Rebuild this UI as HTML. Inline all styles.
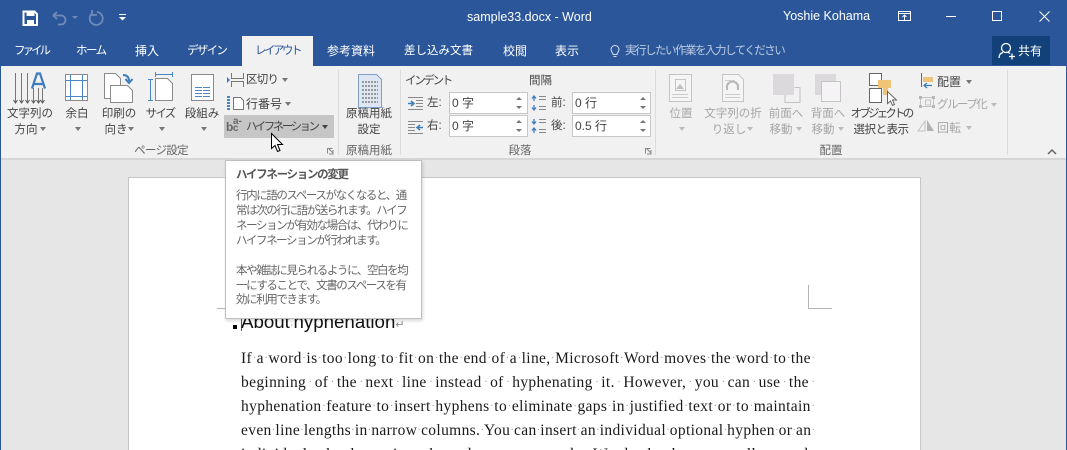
<!DOCTYPE html>
<html lang="ja"><head><meta charset="utf-8"><title>sample33.docx - Word</title>
<style>
html,body{margin:0;padding:0;width:1067px;height:450px;overflow:hidden}
#r{position:absolute;left:0;top:0;width:1067px;height:450px;overflow:hidden;background:#e6e6e6;font-family:"Liberation Sans","Noto Sans CJK JP",sans-serif;color:#444}
#r div,#r svg{position:absolute}
svg{overflow:visible}
.t{white-space:nowrap;font-size:11.5px;line-height:16px;color:#444}
.c{text-align:center;transform:translateX(-50%)}
.w{color:#fff}
.g{color:#a6a6a6}
.d{color:#666}
#r .ln{left:241px;width:574px;height:24px;display:flex;justify-content:space-between;font-family:"Liberation Serif","DejaVu Serif",serif;font-size:15.5px;letter-spacing:.35px;line-height:24px;color:#1a1a1a;white-space:nowrap}
.ln i{font-style:normal;color:#999;font-size:10px;letter-spacing:0}
.box{background:#fff;border:1px solid #c6c6c6;height:22px;width:79px;box-sizing:border-box}
.car{width:0;height:0;border-left:3.5px solid transparent;border-right:3.5px solid transparent;border-top:4px solid #777}
.cg{border-top-color:#bbb}
.tip{font-size:11.5px;letter-spacing:-1.4px;line-height:15px;color:#666;white-space:nowrap}
</style></head><body><div id="r">
<!-- title bar -->
<div style="left:0;top:0;width:1067px;height:66px;background:#2b579a"></div>
<svg style="left:0;top:0" width="400" height="36">
<path d="M23.500 11.500h11l2.500 2.500v11h-13.500z" fill="none" stroke="#fff" stroke-width="2"/><rect x="26.500" y="11" width="8" height="5" fill="#fff"/><rect x="27" y="20" width="7" height="5" fill="#fff"/>
<path d="M53 15.500l4-3.500M53 15.500l4 3.500M53 15.500h8a4.500 4.500 0 0 1 0 9h-3" fill="none" stroke="#6f8bb8" stroke-width="1.800"/>
<path d="M72 16h6l-3 3z" fill="#6f8bb8"/>
<path d="M92 13.500a6.500 6.500 0 1 0 5 -1.500M92 10v5h5" fill="none" stroke="#6f8bb8" stroke-width="1.800"/>
<path d="M119 14.500h7" stroke="#fff"/><path d="M119 17h7l-3.500 3.500z" fill="#fff"/>
</svg>
<div class="t w" style="left:467px;top:9px;font-size:12.500px">sample33.docx - Word</div>
<div class="t w" style="left:783px;top:8px;font-size:12.500px">Yoshie Kohama</div>
<svg style="left:890px;top:0" width="177" height="36">
<rect x="8.500" y="11.500" width="12" height="9" fill="none" stroke="#fff"/><path d="M8 13.500h13" stroke="#fff"/><path d="M14.500 20v-5M12.500 17l2-2 2 2" fill="none" stroke="#fff"/>
<path d="M56 16.500h10" stroke="#fff"/>
<rect x="102.500" y="11.500" width="9" height="9" fill="none" stroke="#fff"/>
<path d="M149.500 11.500l10 10M159.500 11.500l-10 10" stroke="#fff"/>
</svg>
<!-- tabs -->
<div class="t w" style="left:14px;top:43px;letter-spacing:-3px">ファイル</div>
<div class="t w" style="left:76px;top:43px;letter-spacing:-1.5px">ホーム</div>
<div class="t w" style="left:135px;top:43px;font-size:12px">挿入</div>
<div class="t w" style="left:187px;top:43px;letter-spacing:-1.7px">デザイン</div>
<div style="left:242px;top:36px;width:71px;height:30px;background:#f1f1f1"></div>
<div class="t" style="left:255px;top:43px;color:#2b579a;letter-spacing:-2.5px">レイアウト</div>
<div class="t w" style="left:327px;top:43px;font-size:12px">参考資料</div>
<div class="t w" style="left:404px;top:43px">差し込み文書</div>
<div class="t w" style="left:503px;top:43px;font-size:12px">校閲</div>
<div class="t w" style="left:555px;top:43px;font-size:12px">表示</div>
<svg style="left:608px;top:43px" width="14" height="16"><path d="M5 11.500c0-2-2-2.500-2-5a4 4 0 0 1 8 0c0 2.500-2 3-2 5zM5.500 13.500h3" fill="none" stroke="#d5deec"/></svg>
<div class="t" style="left:625px;top:43px;color:#bccbe2;letter-spacing:-1.5px">実行したい作業を入力してください</div>
<div style="left:992px;top:36px;width:58px;height:29px;background:#124078"></div>
<svg style="left:998px;top:42px" width="18" height="18"><circle cx="8" cy="6" r="4.500" fill="none" stroke="#fff" stroke-width="1.300"/><path d="M1 16c0-3.500 2-5 4-5.500M10 10.500c1 .2 1.500.5 2 1M11 14.500h6M14 11.500v6" fill="none" stroke="#fff" stroke-width="1.300"/></svg>
<div class="t w" style="left:1018px;top:43px;font-size:12px">共有</div>
<!-- ribbon -->
<div style="left:1px;top:66px;width:1065px;height:92px;background:#f1f1f1"></div>
<div style="left:1px;top:158px;width:1065px;height:2px;background:#d6d6d6"></div>
<div style="left:0;top:66px;width:1px;height:384px;background:#2b579a"></div>
<div style="left:1066px;top:66px;width:1px;height:384px;background:#2b579a"></div>
<div style="left:338px;top:70px;width:1px;height:85px;background:#dcdcdc"></div>
<div style="left:400px;top:70px;width:1px;height:85px;background:#dcdcdc"></div>
<div style="left:655px;top:70px;width:1px;height:85px;background:#dcdcdc"></div>
<div style="left:1007px;top:70px;width:1px;height:85px;background:#dcdcdc"></div>

<svg style="left:0;top:66px" width="1067" height="92">
<!-- text direction -->
<path d="M15.500 7v30M21.500 7v30M27.500 7v30M33.500 22v15M38.500 22v15M42.500 22v15" stroke="#777" fill="none"/>
<path d="M13.500 34l2 3 2-3M19.500 34l2 3 2-3M25.500 34l2 3 2-3M31.500 34l2 3 2-3M36.500 34l2 3 2-3M40.500 34l2 3 2-3" stroke="#555" fill="none"/>
<path d="M32 22.500l5-15h3l5 15M34 18h9" stroke="#3f7cbd" stroke-width="2.200" fill="none"/>
<!-- margins -->
<rect x="65.500" y="8.500" width="22" height="26" fill="#fff" stroke="#8a8a8a"/><path d="M70.500 9v25M82.500 9v25M66 14.500h21M66 30.500h21" stroke="#4a86c5"/>
<!-- orientation -->
<path d="M104.500 7.500h11l5 5v20h-16z" fill="#fff" stroke="#8a8a8a"/><path d="M110.500 19.500h17l5 5v12h-22z" fill="#fff" stroke="#8a8a8a"/>
<path d="M123 9c4 0 6 2 6 6M125.500 13l3.500 4 3.500-4" fill="none" stroke="#3f7cbd" stroke-width="2"/>
<!-- size -->
<path d="M155 8.500h18M155.500 6v5M172.500 6v5M150.500 13v22M148 13.500h5M148 34.500h5" fill="none" stroke="#4a86c5"/>
<path d="M155.500 12.500h12l5 5v17h-17z" fill="#fff" stroke="#8a8a8a"/>
<!-- columns -->
<rect x="191.500" y="8.500" width="22" height="26" fill="#fff" stroke="#8a8a8a"/>
<path d="M195 21.500h7M203 21.500h7M195 24.500h7M203 24.500h7M195 27.500h7M203 27.500h7M195 30.500h7M203 30.500h7" stroke="#4a86c5"/>
<!-- breaks -->
<path d="M231.500 7v5.500h12V7M231.500 21v-5.500h12V21" fill="none" stroke="#777"/><path d="M227 11v6l3-3z" fill="#3f7cbd"/>
<!-- line nums -->
<path d="M228.500 30v14" stroke="#4a86c5" stroke-width="3" stroke-dasharray="2 1"/>
<path d="M233.500 31.500h7l3 3v9h-10z" fill="#fff" stroke="#777"/>
<!-- genko -->
<path d="M358.500 8.500h18l5 5v28h-23z" fill="#dde6f2" stroke="#7f9fc4"/>
<path d="M362 16h16M362 20h16M362 24h16M362 28h16M362 32h16M362 36h16" stroke="#9a9a9a" stroke-width="2" stroke-dasharray="2 1"/>
<!-- indent icons -->
<path d="M408 31.500h15M416 34.500h7M416 37.500h7M416 40.500h7M408 43.500h15" stroke="#888"/><path d="M408 37.500h6M411 35l3 2.500-3 2.500" fill="none" stroke="#3f7cbd" stroke-width="1.500"/>
<path d="M408 55.500h15M408 58.500h7M408 61.500h7M408 64.500h7M408 67.500h15" stroke="#888"/><path d="M423 61.500h-6M420 59l-3 2.500 3 2.500" fill="none" stroke="#3f7cbd" stroke-width="1.500"/>
<!-- spacing icons -->
<path d="M534 35v-5M532 32.500l2-2.500 2 2.500M534 39v5M532 41.500l2 2.500 2-2.500" fill="none" stroke="#3f7cbd" stroke-width="1.300"/><path d="M539 30.500h7M539 33.500h7M539 40.500h7M539 43.500h7" stroke="#888"/>
<path d="M534 53v5M532 55.500l2 2.500 2-2.500M534 67v-5M532 64.500l2-2.500 2 2.500" fill="none" stroke="#3f7cbd" stroke-width="1.300"/><path d="M539 53.500h7M539 56.500h7M539 63.500h7M539 66.500h7" stroke="#888"/>
<!-- position -->
<rect x="669.500" y="8.500" width="22" height="27" fill="#f5f5f5" stroke="#c4c4c4"/><rect x="675.500" y="13.500" width="10" height="11" fill="none" stroke="#c4c4c4"/><path d="M676 23l4-5 4 5z" fill="#c0c0c0"/><path d="M672 28.500h16M672 31.500h16" stroke="#ccc"/>
<!-- wrap -->
<path d="M722.500 8.500h16l5 5v22h-21z" fill="#f5f5f5" stroke="#c4c4c4"/><path d="M726 19a7 7 0 0 1 13 0v5h-2v-3a4.500 4.500 0 0 0-9 0v3h-2z" fill="#b8b8b8"/><path d="M725 14.500h10M725 28.500h15M725 31.500h15" stroke="#ccc"/>
<!-- forward -->
<rect x="773" y="8" width="21" height="21" fill="#dcd9dc"/><path d="M794.500 21.500h5.500v15h-15v-7.500" fill="none" stroke="#c4c4c4"/>
<!-- back -->
<rect x="815" y="8" width="21" height="21" fill="#dcd9dc"/><rect x="821.500" y="15.500" width="19" height="20" fill="#f5f3f5" stroke="#c4c4c4"/>
<!-- selection pane -->
<rect x="869.500" y="7.500" width="12" height="12" fill="#fff" stroke="#666"/><rect x="869.500" y="22.500" width="12" height="14" fill="#fff" stroke="#666"/>
<path d="M878 14h13v8h-3v7h-5v-7h-5z" fill="#efc476"/>
<path d="M887.500 25.500v12l3-2.500 2 4.500 2-1-2-4.500h4z" fill="#fff" stroke="#666"/>
<!-- align -->
<path d="M921.500 7v14" stroke="#666"/><rect x="923" y="11" width="10" height="5" fill="#efc476"/><path d="M932 19.500h-8M927 17l-3 2.500 3 2.500" fill="none" stroke="#3f7cbd" stroke-width="1.300"/>
<!-- group -->
<rect x="920.500" y="31.500" width="13" height="9" fill="none" stroke="#c4c4c4"/><rect x="919" y="30" width="3" height="3" fill="#b8b8b8"/><rect x="932" y="30" width="3" height="3" fill="#b8b8b8"/><rect x="919" y="39" width="3" height="3" fill="#b8b8b8"/><rect x="932" y="39" width="3" height="3" fill="#b8b8b8"/><rect x="925.500" y="34" width="5" height="5" fill="none" stroke="#c4c4c4"/>
<!-- rotate -->
<path d="M925 55l-7 10h7z" fill="none" stroke="#c4c4c4"/><path d="M927 54v11h7z" fill="#b0b0b0"/>
<!-- launchers -->
<path d="M327.500 87.500v-5h5M329 83l4 4M333 84v4h-4" fill="none" stroke="#888"/>
<path d="M645.500 87.500v-5h5M647 83l4 4M651 84v4h-4" fill="none" stroke="#888"/>
<path d="M1048 88l4-4 4 4" fill="none" stroke="#666" stroke-width="1.500"/>
</svg>

<!-- ribbon labels -->
<div class="t c" style="left:30px;top:106px">文字列の</div>
<div class="t c" style="left:26px;top:122px">方向</div><div class="car" style="left:40px;top:127px"></div>
<div class="t c" style="left:77px;top:106px">余白</div>
<div class="t c" style="left:119px;top:106px">印刷の</div>
<div class="t c" style="left:116px;top:122px">向き</div><div class="car" style="left:128px;top:127px"></div>
<div class="t c" style="left:160px;top:106px;letter-spacing:-1.8px">サイズ</div>
<div class="t c" style="left:202px;top:106px">段組み</div>
<div class="car" style="left:75px;top:127px"></div><div class="car" style="left:159px;top:127px"></div><div class="car" style="left:201px;top:127px"></div>
<div class="t" style="left:246px;top:72px;letter-spacing:-.8px">区切り</div><div class="car" style="left:282px;top:78px"></div>
<div class="t" style="left:246px;top:96px;font-size:12px">行番号</div><div class="car" style="left:285px;top:102px"></div>
<div style="left:224px;top:115px;width:110px;height:23px;background:#c6c6c6"></div>
<div class="t" style="left:226px;top:119px;font-weight:bold;color:#666;font-size:12px;letter-spacing:-.5px">b<span style="font-size:10px">c</span></div>
<div class="t" style="left:233px;top:114px;font-size:10px;font-weight:bold;color:#666">a-</div>
<div class="t" style="left:246px;top:119px;letter-spacing:-2.5px">ハイフネーション</div><div class="car" style="left:322px;top:125px;border-top-color:#444"></div>
<div class="t d c" style="left:161px;top:143px;letter-spacing:-.7px">ページ設定</div>

<div class="t c" style="left:369px;top:106px">原稿用紙</div>
<div class="t c" style="left:369px;top:122px">設定</div>
<div class="t d c" style="left:369px;top:143px">原稿用紙</div>

<div class="t" style="left:405px;top:73px;letter-spacing:-2.3px">インデント</div>
<div class="t" style="left:529px;top:73px">間隔</div>
<div class="t" style="left:427px;top:95px">左:</div>
<div class="t" style="left:427px;top:118px">右:</div>
<div class="t" style="left:551px;top:95px">前:</div>
<div class="t" style="left:551px;top:118px">後:</div>
<div class="box" style="left:449px;top:92px"></div>
<div class="box" style="left:449px;top:115px"></div>
<div class="box" style="left:572px;top:92px"></div>
<div class="box" style="left:572px;top:115px"></div>
<div class="t" style="left:452px;top:95px;font-size:12px">0 字</div>
<div class="t" style="left:452px;top:118px;font-size:12px">0 字</div>
<div class="t" style="left:575px;top:95px;font-size:12px">0 行</div>
<div class="t" style="left:575px;top:118px;font-size:12px">0.5 行</div>
<svg style="left:0;top:0" width="660" height="140" fill="#777">
<path d="M516 100l3-3 3 3zM516 106l3 3 3-3zM516 123l3-3 3 3zM516 129l3 3 3-3zM640 100l3-3 3 3zM640 106l3 3 3-3zM640 123l3-3 3 3zM640 129l3 3 3-3z"/>
</svg>
<div class="t d c" style="left:520px;top:143px">段落</div>

<div class="t g c" style="left:681px;top:106px">位置</div>
<div class="t g c" style="left:733px;top:106px">文字列の折</div>
<div class="t g c" style="left:729px;top:122px">り返し</div><div class="car cg" style="left:747px;top:127px"></div>
<div class="t g c" style="left:786px;top:106px">前面へ</div>
<div class="t g c" style="left:781px;top:122px">移動</div><div class="car cg" style="left:796px;top:127px"></div>
<div class="t g c" style="left:828px;top:106px">背面へ</div>
<div class="t g c" style="left:823px;top:122px">移動</div><div class="car cg" style="left:838px;top:127px"></div>
<div class="car cg" style="left:679px;top:127px"></div>
<div class="t c" style="left:881px;top:106px;letter-spacing:-2.8px">オブジェクトの</div>
<div class="t c" style="left:881px;top:122px;letter-spacing:-.5px">選択と表示</div>
<div class="t" style="left:937px;top:74px;font-size:12px">配置</div><div class="car" style="left:966px;top:80px"></div>
<div class="t g" style="left:937px;top:97px;letter-spacing:-1.5px">グループ化</div><div class="car cg" style="left:991px;top:103px"></div>
<div class="t g" style="left:937px;top:120px;font-size:12px">回転</div><div class="car cg" style="left:966px;top:126px"></div>
<div class="t d c" style="left:831px;top:143px">配置</div>

<!-- page -->
<div style="left:128px;top:177px;width:793px;height:273px;background:#fff;border:1px solid #c6c6c6;border-bottom:0;box-sizing:border-box"></div>
<div style="left:808px;top:285px;width:1px;height:24px;background:#b4b4b4"></div>
<div style="left:808px;top:308px;width:24px;height:1px;background:#b4b4b4"></div>
<div style="left:217px;top:308px;width:24px;height:1px;background:#b4b4b4"></div>
<div style="left:233px;top:325px;width:4px;height:4px;background:#000"></div>
<div style="left:241px;top:312px;width:1px;height:19px;background:#555"></div>
<div class="t" style="left:241px;top:310px;font-size:18.700px;line-height:24px;color:#111">About<span style="color:#888;font-size:11px">·</span>hyphenation<span style="color:#888;font-size:11px">↵</span></div>
<div class="ln" style="top:347px"><span>If</span><i>·</i><span>a</span><i>·</i><span>word</span><i>·</i><span>is</span><i>·</i><span>too</span><i>·</i><span>long</span><i>·</i><span>to</span><i>·</i><span>fit</span><i>·</i><span>on</span><i>·</i><span>the</span><i>·</i><span>end</span><i>·</i><span>of</span><i>·</i><span>a</span><i>·</i><span>line,</span><i>·</i><span>Microsoft</span><i>·</i><span>Word</span><i>·</i><span>moves</span><i>·</i><span>the</span><i>·</i><span>word</span><i>·</i><span>to</span><i>·</i><span>the</span><i>·</i></div>
<div class="ln" style="top:371px"><span>beginning</span><i>·</i><span>of</span><i>·</i><span>the</span><i>·</i><span>next</span><i>·</i><span>line</span><i>·</i><span>instead</span><i>·</i><span>of</span><i>·</i><span>hyphenating</span><i>·</i><span>it.</span><i>·</i><span>However,</span><i>·</i><span>you</span><i>·</i><span>can</span><i>·</i><span>use</span><i>·</i><span>the</span><i>·</i></div>
<div class="ln" style="top:395px"><span>hyphenation</span><i>·</i><span>feature</span><i>·</i><span>to</span><i>·</i><span>insert</span><i>·</i><span>hyphens</span><i>·</i><span>to</span><i>·</i><span>eliminate</span><i>·</i><span>gaps</span><i>·</i><span>in</span><i>·</i><span>justified</span><i>·</i><span>text</span><i>·</i><span>or</span><i>·</i><span>to</span><i>·</i><span>maintain</span><i>·</i></div>
<div class="ln" style="top:419px"><span>even</span><i>·</i><span>line</span><i>·</i><span>lengths</span><i>·</i><span>in</span><i>·</i><span>narrow</span><i>·</i><span>columns.</span><i>·</i><span>You</span><i>·</i><span>can</span><i>·</i><span>insert</span><i>·</i><span>an</span><i>·</i><span>individual</span><i>·</i><span>optional</span><i>·</i><span>hyphen</span><i>·</i><span>or</span><i>·</i><span>an</span><i>·</i></div>
<div class="ln" style="top:443px"><span>individual</span><i>·</i><span>hyphen</span><i>·</i><span>in</span><i>·</i><span>the</span><i>·</i><span>document,</span><i>·</i><span>and</span><i>·</i><span>Word</span><i>·</i><span>hyphenates</span><i>·</i><span>all</span><i>·</i><span>words</span></div>

<!-- tooltip -->
<div style="left:225px;top:160px;width:197px;height:159px;box-sizing:border-box;background:#fff;border:1px solid #bfbfbf;box-shadow:1px 2px 3px rgba(0,0,0,.15)"></div>
<div class="tip" style="left:236px;top:168px;font-weight:bold;color:#555;letter-spacing:-1.3px">ハイフネーションの変更</div>
<div class="tip" style="left:236px;top:189px">行内に語のスペースがなくなると、通</div>
<div class="tip" style="left:236px;top:204px">常は次の行に語が送られます。ハイフ</div>
<div class="tip" style="left:236px;top:219px">ネーションが有効な場合は、代わりに</div>
<div class="tip" style="left:236px;top:234px">ハイフネーションが行われます。</div>
<div class="tip" style="left:236px;top:264px">本や雑誌に見られるように、空白を均</div>
<div class="tip" style="left:236px;top:279px">一にすることで、文書のスペースを有</div>
<div class="tip" style="left:236px;top:293px">効に利用できます。</div>

<!-- cursor -->
<svg style="left:271px;top:133px" width="14" height="20"><path d="M0.500 0.500v15l3.500-3 2.500 6 2.500-1-2.500-6h5z" fill="#fff" stroke="#000"/></svg>
</div></body></html>
